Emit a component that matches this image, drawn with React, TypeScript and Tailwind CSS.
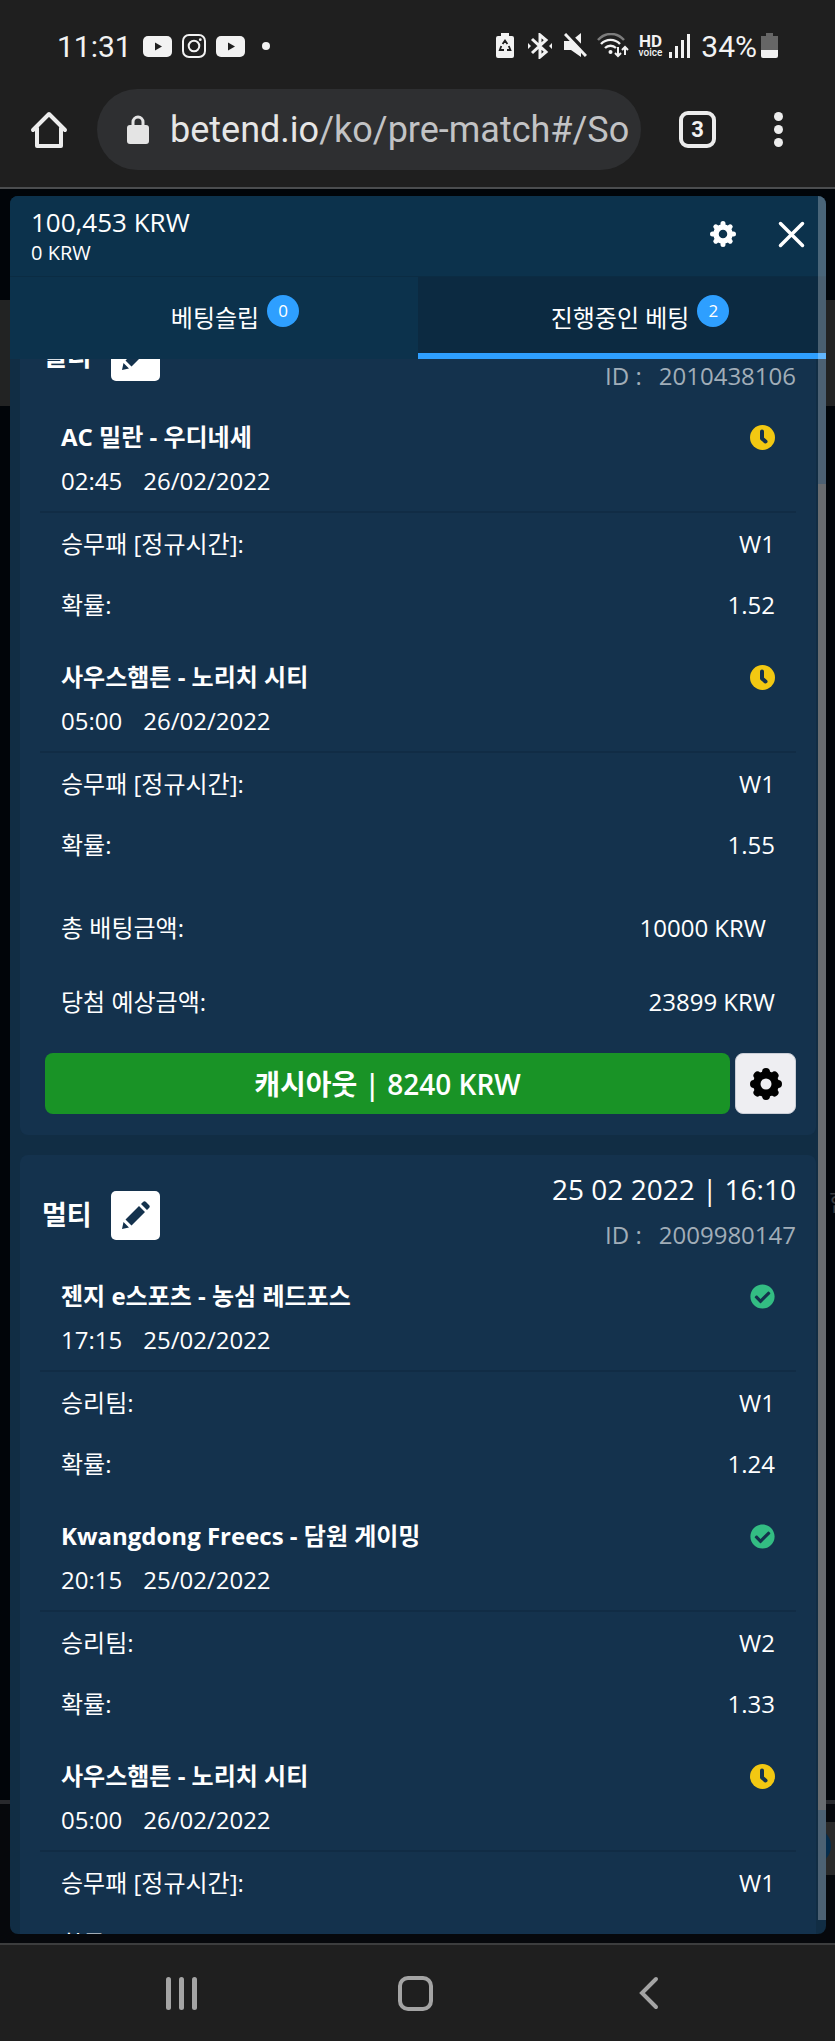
import React from "react";
import { FaCheckCircle, FaClock } from "react-icons/fa";

type Status = "pending" | "won";

type Match = {
  title: string;
  time: string;
  date: string;
  market: string;
  pick: string;
  odds: string;
  status: Status;
};

const firstBet: Match[] = [
  { title: "AC 밀란 - 우디네세", time: "02:45", date: "26/02/2022", market: "승무패 [정규시간]:", pick: "W1", odds: "1.52", status: "pending" },
  { title: "사우스햄튼 - 노리치 시티", time: "05:00", date: "26/02/2022", market: "승무패 [정규시간]:", pick: "W1", odds: "1.55", status: "pending" },
];

const secondBet: Match[] = [
  { title: "젠지 e스포츠 - 농심 레드포스", time: "17:15", date: "25/02/2022", market: "승리팀:", pick: "W1", odds: "1.24", status: "won" },
  { title: "Kwangdong Freecs - 담원 게이밍", time: "20:15", date: "25/02/2022", market: "승리팀:", pick: "W2", odds: "1.33", status: "won" },
  { title: "사우스햄튼 - 노리치 시티", time: "05:00", date: "26/02/2022", market: "승무패 [정규시간]:", pick: "W1", odds: "1.55", status: "pending" },
];

function YoutubeIcon() {
  return (
    <svg width="29" height="21" viewBox="0 0 29 21">
      <rect width="29" height="21" rx="5" fill="#f2f2f2" />
      <path d="M12 6.5v8l7-4z" fill="#1f1f1f" />
    </svg>
  );
}

function InstagramIcon() {
  return (
    <svg width="24" height="24" viewBox="0 0 24 24" fill="none" stroke="#f2f2f2" strokeWidth="2">
      <rect x="1" y="1" width="22" height="22" rx="6" />
      <circle cx="12" cy="12" r="5.3" />
      <circle cx="18.3" cy="5.7" r="1.4" fill="#f2f2f2" stroke="none" />
    </svg>
  );
}

function StatusBar() {
  return (
    <div className="flex h-[92px] shrink-0 items-center justify-between pr-[57px] pl-[57px] text-[30px]">
      <div className="flex items-center">
        <span className="mr-[11px]">11:31</span>
        <YoutubeIcon />
        <span className="mx-[10px]">
          <InstagramIcon />
        </span>
        <YoutubeIcon />
        <span className="ml-[17px] size-2 rounded-full bg-[#f2f2f2]" />
      </div>
      <div className="flex items-center">
        <svg width="18" height="26" viewBox="0 0 18 26" className="mr-[14px]">
          <path d="M5 0h8v3h3a2 2 0 0 1 2 2v18a2 2 0 0 1-2 2H2a2 2 0 0 1-2-2V5a2 2 0 0 1 2-2h3z" fill="#f2f2f2" />
          <path d="M6.6 11 9 7.6l2.4 3.4M12.8 13l1.6 4h-3.4M8 17H3.8l1.5-4" fill="none" stroke="#1f1f1f" strokeWidth="1.8" />
        </svg>
        <svg width="24" height="26" viewBox="0 0 24 26" className="mr-3" fill="none" stroke="#f2f2f2" strokeWidth="3">
          <path d="m4 6 14 13-6 5V2l6 5L4 20" />
          <path d="m0 10 3 3-3 3zM24 10l-3 3 3 3z" fill="#f2f2f2" stroke="none" />
        </svg>
        <svg width="23" height="26" viewBox="0 0 23 26" className="mr-[10px]">
          <path d="M0 8h7l10-8v24l-10-7H0z" fill="#f2f2f2" />
          <path d="m3 -1 22 23" stroke="#1f1f1f" strokeWidth="4" />
          <path d="m1 1 21 22" stroke="#f2f2f2" strokeWidth="3" />
        </svg>
        <svg width="32" height="26" viewBox="0 0 32 26" className="mr-[10px]" fill="none" stroke="#f2f2f2" strokeWidth="2.4">
          <path d="M1 7a17 17 0 0 1 26 0" stroke="#7c7c7c" />
          <path d="M4 11a13 13 0 0 1 19 0M8 15a8 8 0 0 1 11 0" />
          <circle cx="13.5" cy="19" r="2" fill="#f2f2f2" stroke="none" />
          <path d="M21 14v9m-3-3 3 3 3-3M28 22v-8m-3 3 3-3 3 3" strokeWidth="2" />
        </svg>
        <div className="mr-[7px] flex flex-col items-center">
          <span className="text-[17px] leading-[14px] font-bold">HD</span>
          <span className="text-[10px] leading-[10px] font-medium">voice</span>
        </div>
        <svg width="22" height="24" viewBox="0 0 22 24" className="mr-[10px]" fill="#f2f2f2">
          <rect y="18" width="3" height="6" />
          <rect x="6" y="12" width="3" height="12" />
          <rect x="12" y="6" width="3" height="18" />
          <rect x="18" width="3" height="24" />
        </svg>
        <span className="mr-1">34%</span>
        <svg width="17" height="26" viewBox="0 0 17 26">
          <path d="M5 0h7v3h5v14H0V3h5z" fill="#666" />
          <path d="M0 17h17v6a2 2 0 0 1-2 2H2a2 2 0 0 1-2-2z" fill="#f2f2f2" />
        </svg>
      </div>
    </div>
  );
}

function Toolbar() {
  return (
    <div className="flex h-[95px] shrink-0 items-start pr-[52px] pl-[30px]">
      <button type="button" aria-label="홈" className="mt-[18px] mr-[29px]">
        <svg width="38" height="40" viewBox="0 0 38 40" fill="none" stroke="#ececec" strokeWidth="4" strokeLinejoin="round" strokeLinecap="round">
          <path d="M3 20 19 4l16 16M7 18v18h24V18" />
        </svg>
      </button>
      <a href="#/So" className="-mt-[3px] flex h-[81px] min-w-0 flex-1 items-center overflow-hidden rounded-full bg-[#2e2f31] pr-2 pl-[30px] text-[36px] whitespace-nowrap">
        <svg width="22" height="30" viewBox="0 0 22 30" className="mr-[21px] shrink-0">
          <rect y="10" width="22" height="19" rx="3" fill="#e4e4e4" />
          <path d="M6 11V7a5 5 0 0 1 10 0v4" fill="none" stroke="#e4e4e4" strokeWidth="3" />
        </svg>
        <span className="text-[#e6e6e6]">betend.io</span>
        <span className="text-[#c2c3c5]">/ko/pre-match#/So</span>
      </a>
      <button type="button" className="mt-[19px] ml-[38px] flex size-[37px] items-center justify-center rounded-[9px] border-4 border-[#ececec] text-[22px] font-bold">
        3
      </button>
      <button type="button" aria-label="메뉴" className="mt-[20px] ml-[58px] flex flex-col gap-1">
        <span className="size-[9px] rounded-full bg-[#ececec]" />
        <span className="size-[9px] rounded-full bg-[#ececec]" />
        <span className="size-[9px] rounded-full bg-[#ececec]" />
      </button>
    </div>
  );
}

function StatusIcon({ status }: { status: Status }) {
  if (status === "won") {
    return <FaCheckCircle size={25} className="text-[#33bd83]" />;
  }
  return (
    <svg width="25" height="25" viewBox="0 0 25 25">
      <circle cx="12.5" cy="12.5" r="12.5" fill="#f2c812" />
      <path d="M12 6.500v7l3.500 3" fill="none" stroke="#14324d" strokeWidth="4" strokeLinecap="round" strokeLinejoin="round" />
    </svg>
  );
}

function MatchItem({ match }: { match: Match }) {
  return (
    <div className="pb-5">
      <div className="border-b-2 border-[#112c45] px-[21px] pb-2">
        <div className="flex h-11 items-center justify-between">
          <h3 className="font-bold">{match.title}</h3>
          <StatusIcon status={match.status} />
        </div>
        <div className="flex h-11 items-center gap-[21px]">
          <span>{match.time}</span>
          <span>{match.date}</span>
        </div>
      </div>
      <div className="flex h-[61px] items-center justify-between px-[21px]">
        <span>{match.market}</span>
        <span>{match.pick}</span>
      </div>
      <div className="flex h-[61px] items-center justify-between px-[21px]">
        <span>확률:</span>
        <span>{match.odds}</span>
      </div>
    </div>
  );
}

type BetCardProps = {
  date?: string;
  id: string;
  matches: Match[];
  children?: React.ReactNode;
};

function BetCard({ date, id, matches, children }: BetCardProps) {
  return (
    <section className="rounded-lg bg-[#14324d] px-5 pt-[11px] pb-[21px]">
      <div className="mb-4 flex items-center justify-between">
        <div className="flex items-center pt-[6px] pl-[2px]">
          <h2 className="w-[69px] text-[27px] font-bold">멀티</h2>
          <button type="button" aria-label="수정" className="flex size-[49px] items-center justify-center rounded-[5px] bg-white">
            <svg width="28" height="28" viewBox="0 0 28 28" fill="#14324d">
              <path d="M0 28l1.5-7 5.5 5.5zM3.500 18.500 17 5l6 6L9.500 24.500zM19 3l2-2q1.500-1.500 3 0l3 3q1.500 1.500 0 3l-2 2z" />
            </svg>
          </button>
        </div>
        <div className="text-right">
          <p className="h-[46px] text-[28px] leading-[46px]">{date}</p>
          <p className="flex h-[46px] justify-end gap-[17px] leading-[46px] text-[#a1adb8]">
            <span>ID :</span>
            <span>{id}</span>
          </p>
        </div>
      </div>
      {matches.map((match) => (
        <MatchItem key={match.title} match={match} />
      ))}
      {children}
    </section>
  );
}

function SlipHeader() {
  return (
    <div className="flex h-20 shrink-0 items-center justify-between px-[21px]">
      <div>
        <p className="text-[26px] leading-[34px]">100,453 KRW</p>
        <p className="text-[20px] leading-[28px]">0 KRW</p>
      </div>
      <div className="mb-1 flex items-center gap-[42px]">
        <button type="button" aria-label="설정">
          <svg width="26" height="26" viewBox="0 0 26 26" fill="none" stroke="#fff">
            <circle cx="13" cy="13" r="7" strokeWidth="5.500" />
            <path d="M13 2.500v3M13 20.500v3M2.500 13h3M20.500 13h3M5.800 5.800l2 2M18.200 18.200l2 2M20.200 5.800l-2 2M7.800 18.200l-2 2" strokeWidth="5" strokeLinecap="round" />
          </svg>
        </button>
        <button type="button" aria-label="닫기">
          <svg width="27" height="27" viewBox="0 0 27 27" stroke="#fff" strokeWidth="3.500" strokeLinecap="round">
            <path d="M2.500 2.500l22 22M24.500 2.500l-22 22" />
          </svg>
        </button>
      </div>
    </div>
  );
}

function Tabs() {
  return (
    <div className="grid h-[83px] shrink-0 grid-cols-2 border-t border-[#0b2c43]">
      <button type="button" className="flex items-center justify-center gap-2 pl-[42px]">
        <span>베팅슬립</span>
        <span className="mb-[14px] flex size-8 items-center justify-center rounded-full bg-[#2e9fff] text-[17px]">0</span>
      </button>
      <button type="button" className="flex items-center justify-center gap-2 border-b-[6px] border-[#2e9fff] bg-[#0c2a41] pt-[6px] pl-[36px]">
        <span>진행중인 베팅</span>
        <span className="mb-[14px] flex size-8 items-center justify-center rounded-full bg-[#2e9fff] text-[17px]">2</span>
      </button>
    </div>
  );
}

export default function App() {
  return (
    <div className="flex h-screen flex-col bg-[#1f1f1f] font-['Roboto','Noto_Sans_CJK_KR',sans-serif] text-[#f2f2f2]">
      <StatusBar />
      <Toolbar />
      <main className="relative flex min-h-0 flex-1 flex-col overflow-hidden border-t-2 border-[#4b4d4f] bg-[#010509] pt-[7px] pr-[9px] pb-[9px] pl-[10px]">
        {/* dimmed page behind the slip */}
        <div className="absolute inset-x-0 top-[111px] h-[106px] bg-[#222323]" />
        <div className="absolute inset-x-0 top-[1611px] bottom-0 border-t-4 border-[#28292d] bg-[#06080c]" />
        <div className="absolute top-[1633px] right-0 h-[53px] w-5 overflow-hidden bg-[#292929]">
          <div className="mt-[6px] -ml-5 h-9 w-9 rounded-full bg-[#052c4c]" />
        </div>
        <span className="absolute top-[996px] -right-4 text-[24px] text-[#3a3c3e]">합</span>
        <div className="relative flex min-h-0 flex-1 flex-col overflow-hidden rounded-lg bg-[#112d44] font-['Open_Sans','Noto_Sans_CJK_KR',sans-serif] text-[24px] text-white">
          <div className="flex shrink-0 flex-col bg-[#0c324c]">
            <SlipHeader />
            <Tabs />
          </div>
          <div className="min-h-0 flex-1 overflow-hidden px-[10px]">
            {/* list is scrolled past the first card's date line */}
            <div className="-mt-[63px] flex flex-col gap-5">
              <BetCard id="2010438106" matches={firstBet}>
                <div className="flex h-[66px] items-center justify-between pr-[30px] pl-[21px]">
                  <span>총 배팅금액:</span>
                  <span>10000 KRW</span>
                </div>
                <div className="mt-2 flex h-[66px] items-center justify-between px-[21px]">
                  <span>당첨 예상금액:</span>
                  <span>23899 KRW</span>
                </div>
                <div className="mt-[18px] flex gap-[5px] pl-[5px]">
                  <button type="button" className="h-[61px] flex-1 rounded-lg bg-[#199326] text-[28px] font-semibold">
                    캐시아웃 | 8240 KRW
                  </button>
                  <button type="button" aria-label="캐시아웃 설정" className="flex h-[61px] w-[61px] items-center justify-center rounded-lg border border-[#c9cdd6] bg-[#eeeef2]">
                    <svg width="32" height="32" viewBox="0 0 32 32">
                      <circle cx="16" cy="16" r="9" fill="none" stroke="#000" strokeWidth="8" />
                      <path d="M16 4v24M4 16h24M7.500 7.500l17 17M24.500 7.500l-17 17" stroke="#000" strokeWidth="8" strokeLinecap="round" />
                      <circle cx="16" cy="16" r="5.500" fill="#eeeef2" />
                    </svg>
                  </button>
                </div>
              </BetCard>
              <BetCard date="25 02 2022 | 16:10" id="2009980147" matches={secondBet} />
            </div>
          </div>
          <div className="absolute top-0 right-0 bottom-[14px] w-2 bg-white/25">
            <div className="mt-[288px] h-[1326px] bg-[#6b6e70]/90" />
          </div>
        </div>
      </main>
      <nav className="grid h-[98px] shrink-0 grid-cols-3 items-center border-t-2 border-[#3c3d3e] pr-[69px] pl-16">
        <button type="button" aria-label="최근 앱" className="flex justify-center gap-2">
          <span className="h-[33px] w-[5px] rounded-full bg-[#a4a4a4]" />
          <span className="h-[33px] w-[5px] rounded-full bg-[#a4a4a4]" />
          <span className="h-[33px] w-[5px] rounded-full bg-[#a4a4a4]" />
        </button>
        <button type="button" aria-label="홈 화면" className="mx-auto size-[35px] rounded-[10px] border-4 border-[#a4a4a4]" />
        <button type="button" aria-label="뒤로" className="flex justify-center">
          <svg width="20" height="34" viewBox="0 0 20 34" fill="none" stroke="#a4a4a4" strokeWidth="4" strokeLinecap="round">
            <path d="M17 3 3 17l14 14" />
          </svg>
        </button>
      </nav>
    </div>
  );
}
